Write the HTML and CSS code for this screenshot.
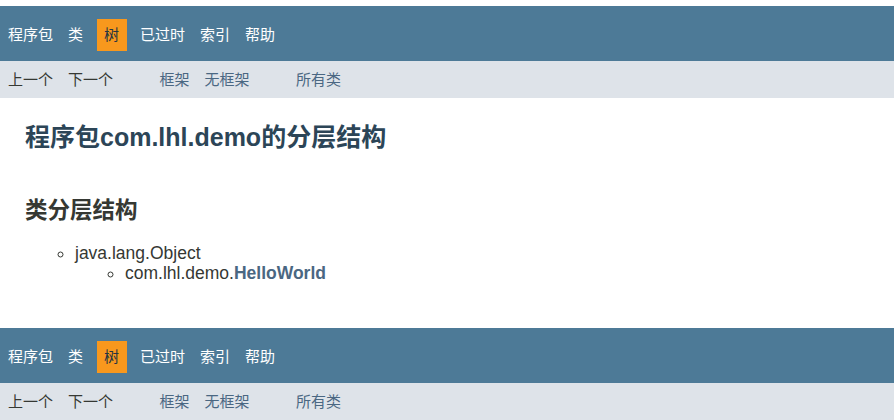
FILE: index.html
```html
<!DOCTYPE html>
<html lang="zh">
<head>
    <meta charset="UTF-8">
    <title>com.lhl.demo 类分层结构</title>
    <link rel="stylesheet" href="styles.css">
</head>
<body>
    <div class="top-nav">
        <ul class="nav-list">
            <li><a href="#">程序包</a></li>
            <li>类</li>
            <li class="nav-current">树</li>
            <li><a href="#">已过时</a></li>
            <li><a href="#">索引</a></li>
            <li><a href="#">帮助</a></li>
        </ul>
    </div>
    <div class="sub-nav">
        <ul class="nav-list">
            <li>上一个</li>
            <li>下一个</li>
        </ul>
        <ul class="nav-list">
            <li><a href="#">框架</a></li>
            <li><a href="#">无框架</a></li>
        </ul>
        <ul class="nav-list">
            <li><a href="#">所有类</a></li>
        </ul>
    </div>

    <div class="header">
        <h1 class="title">程序包com.lhl.demo的分层结构</h1>
    </div>
    <div class="content">
        <h2>类分层结构</h2>
        <ul class="tree">
            <li>java.lang.Object
                <ul class="tree">
                    <li>com.lhl.demo.<a href="#" class="type-link">HelloWorld</a></li>
                </ul>
            </li>
        </ul>
    </div>

    <div class="top-nav bottom">
        <ul class="nav-list">
            <li><a href="#">程序包</a></li>
            <li>类</li>
            <li class="nav-current">树</li>
            <li><a href="#">已过时</a></li>
            <li><a href="#">索引</a></li>
            <li><a href="#">帮助</a></li>
        </ul>
    </div>
    <div class="sub-nav">
        <ul class="nav-list">
            <li>上一个</li>
            <li>下一个</li>
        </ul>
        <ul class="nav-list">
            <li><a href="#">框架</a></li>
            <li><a href="#">无框架</a></li>
        </ul>
        <ul class="nav-list">
            <li><a href="#">所有类</a></li>
        </ul>
    </div>
</body>
</html>
```

FILE: styles.css
```css
body {
    font-family: "Liberation Sans", Arial, "Noto Sans CJK SC", sans-serif;
    font-size: 17.5px;
    color: #353833;
    background-color: #fff;
    margin: 0;
    padding-top: 6px;
}

a {
    text-decoration: none;
}

.top-nav {
    background-color: #4D7A97;
    color: #fff;
    height: 55px;
    padding-top: 13px;
    box-sizing: border-box;
    font-size: 15px;
}

.top-nav.bottom {
    margin-top: 45px;
}

.top-nav a {
    color: #fff;
}

.nav-list {
    display: flex;
    list-style: none;
    margin: 0;
    padding: 0 0 0 0.5px;
}

.nav-list li {
    padding: 6px 7.5px;
    line-height: 20px;
}

.nav-current {
    background-color: #F8981D;
    color: #253441;
    margin: 0 6px;
}

.sub-nav {
    background-color: #dee3e9;
    height: 37px;
    display: flex;
    align-items: center;
    gap: 31px;
    font-size: 15px;
}

.sub-nav a {
    color: #4A6782;
}

.header {
    padding: 24px 25px 0;
}

.title {
    color: #2c4557;
    font-size: 25px;
    line-height: 30px;
    margin: 0;
}

.content {
    padding: 45px 25px 0;
}

.content h2 {
    font-size: 22.5px;
    line-height: 28px;
    margin: 0 0 18px;
}

.tree {
    list-style: circle;
    margin: 0;
    padding-left: 50px;
    line-height: 20px;
}

.type-link {
    color: #4A6782;
    font-weight: bold;
}
```
